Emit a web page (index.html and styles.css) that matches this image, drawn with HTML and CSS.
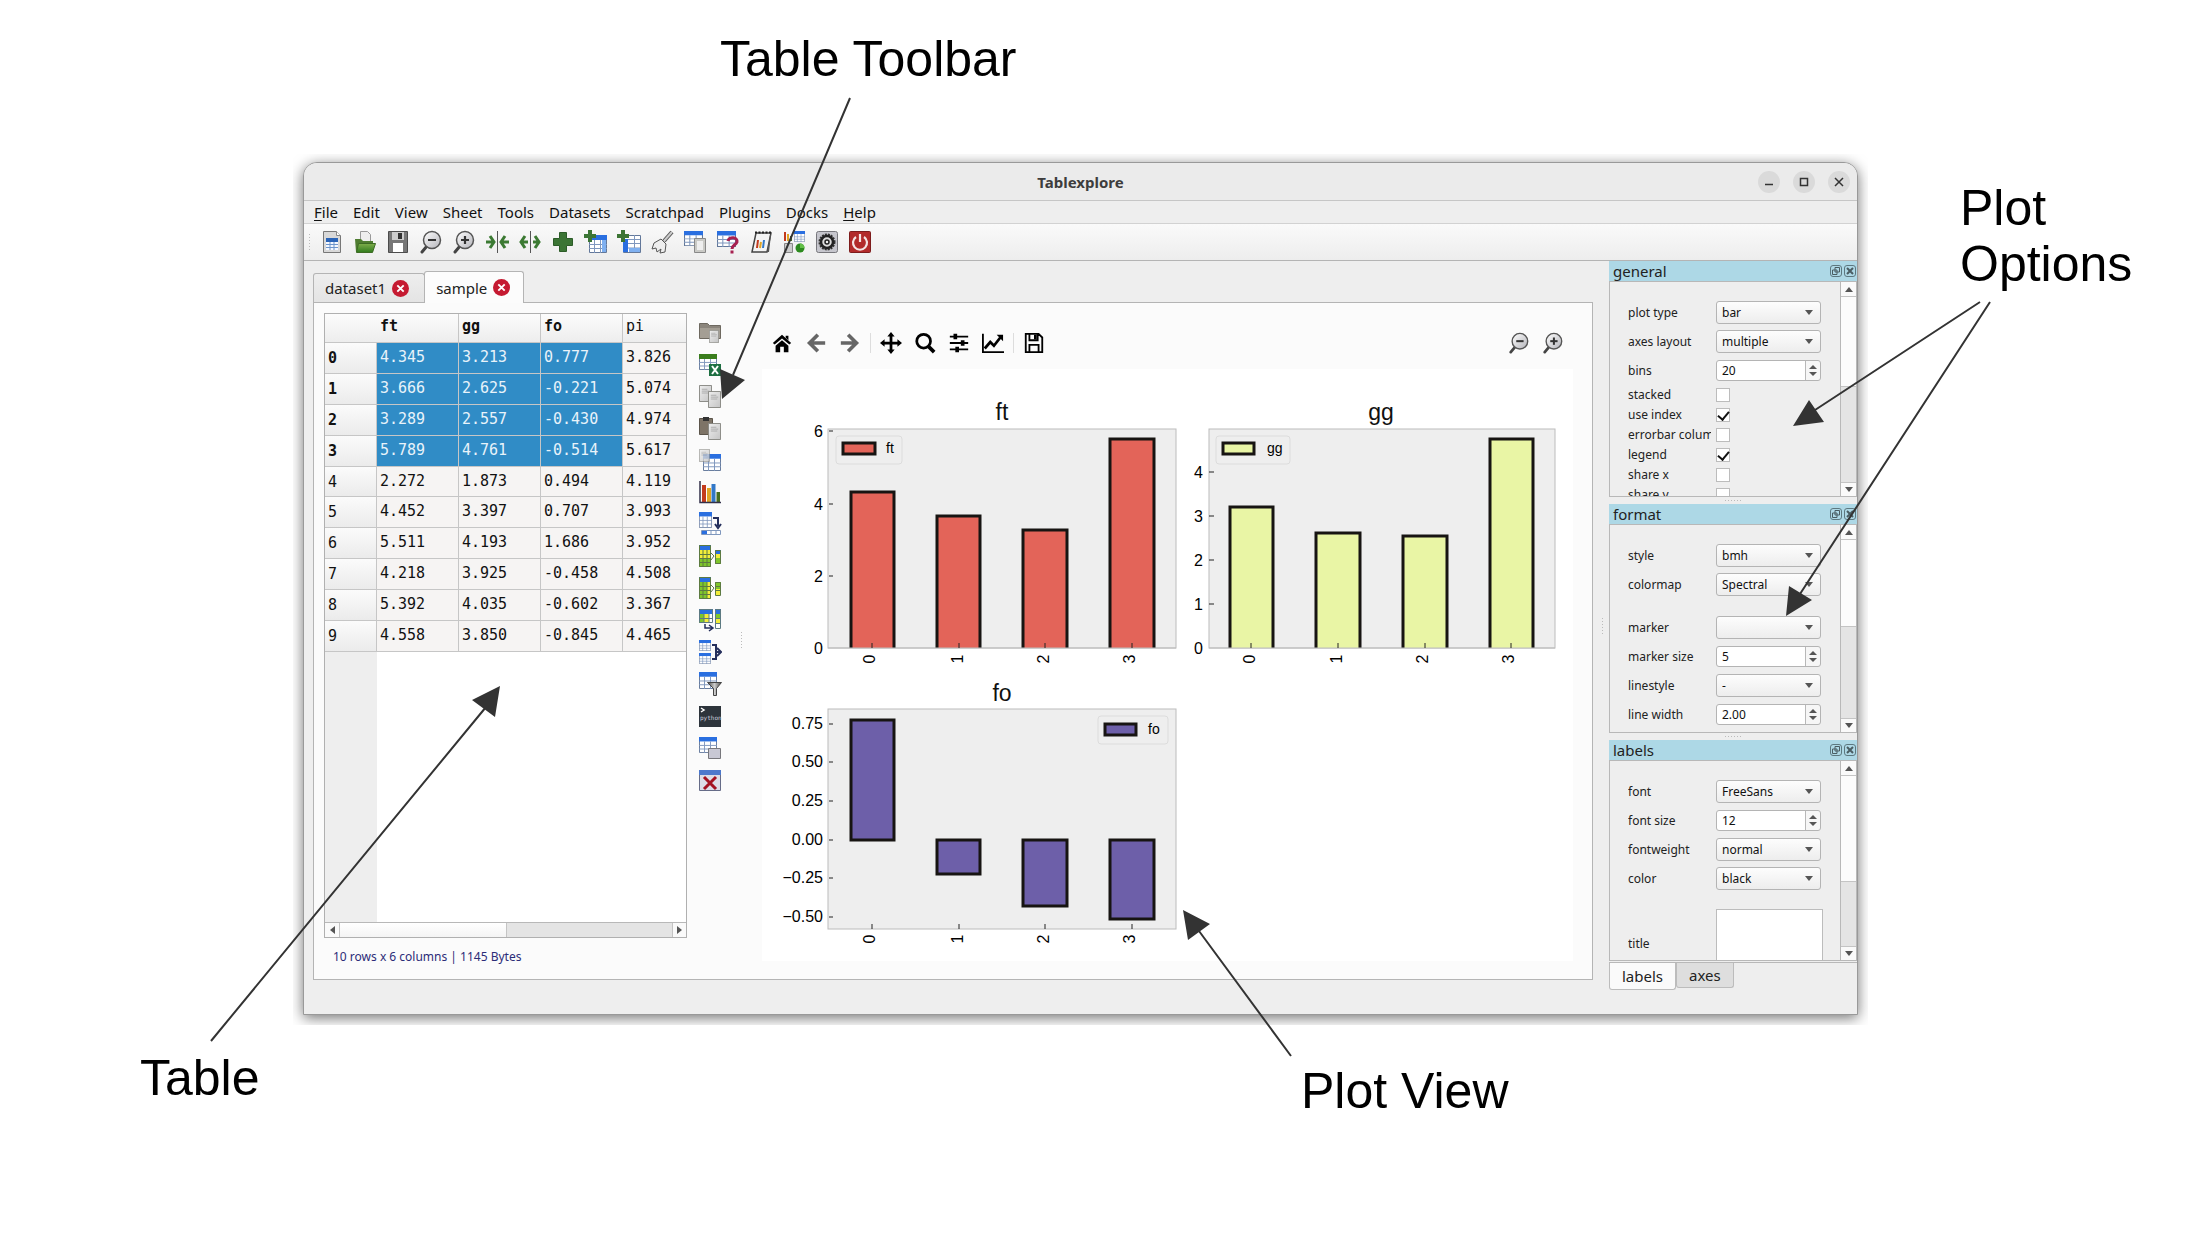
FILE: index.html
```html
<!DOCTYPE html>
<html lang="en">
<head>
<meta charset="utf-8">
<title>Tablexplore overview</title>
<link rel="stylesheet" href="styles.css">
</head>
<body>
<svg class="defs" aria-hidden="true">
  <defs>
    <linearGradient id="lens" x1="0" y1="0" x2="1" y2="1"><stop offset="0" stop-color="#fff"/><stop offset="1" stop-color="#b4b4ba"/></linearGradient>
    <linearGradient id="paper" x1="0" y1="0" x2="1" y2="1"><stop offset="0" stop-color="#eee"/><stop offset="1" stop-color="#c4c4c4"/></linearGradient>
    <linearGradient id="funnel"><stop offset="0" stop-color="#444"/><stop offset=".5" stop-color="#ccc"/><stop offset="1" stop-color="#444"/></linearGradient>
    <linearGradient id="leaf" x1="0" y1="0" x2="0" y2="1"><stop offset="0" stop-color="#7fae4c"/><stop offset="1" stop-color="#2f7a1c"/></linearGradient>
    <symbol id="grid" viewBox="0 0 18 18" preserveAspectRatio="none"><path fill="#fff" stroke="#63789a" d="M.5.5h17v17H.5z"/><path fill="#2a6fe0" d="M0 0h18v5H0z"/><path stroke="#7f97bd" fill="none" d="M0 9.500h18M0 13.500h18M5.500 5v13M11.500 5v13"/></symbol>
    <symbol id="page" viewBox="0 0 14 18" preserveAspectRatio="none"><path fill="url(#paper)" stroke="#85857f" d="M.5.5h13v17H.5z"/><path stroke="#aaa" d="M3 4.500h6M3 6.500h8M3 8.500h7"/></symbol>
    <symbol id="zoom-out" viewBox="0 0 24 24"><path stroke="#444" stroke-width="3" stroke-linecap="round" d="M8 16l-5 6"/><circle cx="13" cy="10" r="8.500" fill="url(#lens)" stroke="#555" stroke-width="1.500"/><path stroke="#333" stroke-width="2.200" d="M9 10h8"/></symbol>
    <symbol id="zoom-in" viewBox="0 0 24 24"><use href="#zoom-out"/><path stroke="#333" stroke-width="2.200" d="M13 6v8"/></symbol>
    <symbol id="bars" viewBox="0 0 24 24"><path fill="#c33b1e" d="M4 5h4v17H4z"/><path fill="#e0a526" d="M9 8h4v14H9z"/><path fill="#3378c7" d="M13.500 4h4v18h-4z"/><path fill="#476d20" d="M18.500 12h3.500v10h-3.500z"/><path fill="none" stroke="#33304a" stroke-width="1.500" d="M2 1v21.500h21"/></symbol>
    <symbol id="dock-float" viewBox="0 0 12 12"><rect x=".5" y=".5" width="11" height="11" rx="2.500" fill="none" stroke="#5d7880"/><path fill="none" stroke="#4a5d63" d="M5 2.500h4.500V7H5zM2.500 5H7v4.500H2.500z"/></symbol>
    <symbol id="dock-close" viewBox="0 0 12 12"><rect x=".5" y=".5" width="11" height="11" rx="2.500" fill="none" stroke="#5d7880"/><path stroke="#4a5d63" stroke-width="2" d="M3 3l6 6M9 3L3 9"/></symbol>
    <symbol id="tab-close" viewBox="0 0 16 16"><circle cx="8" cy="8" r="8" fill="#c51a31"/><path stroke="#fff" stroke-width="1.800" d="M5 5l6 6M11 5l-6 6"/></symbol>
  </defs>
</svg>

<main class="figure">
  <div class="shade">
  <section class="window">
    <header class="titlebar">
      <h1>Tablexplore</h1>
      <div class="winbtns">
        <button aria-label="Minimize"><svg viewBox="0 0 22 22"><path d="M7 13.500h8"/></svg></button>
        <button aria-label="Maximize"><svg viewBox="0 0 22 22"><path d="M7.500 7.500h7v7h-7z"/></svg></button>
        <button aria-label="Close"><svg viewBox="0 0 22 22"><path d="M7 7l8 8M15 7l-8 8"/></svg></button>
      </div>
    </header>
    <nav class="menubar">
      <button><u>F</u>ile</button><button>Edit</button><button>View</button><button>Sheet</button><button>Tools</button><button>Datasets</button><button>Scratchpad</button><button>Plugins</button><button>Docks</button><button><u>H</u>elp</button>
    </nav>
    <div class="toolbar">
      <span class="grip"></span>
      <button aria-label="New"><svg viewBox="0 0 24 24"><path fill="#d8d8d8" stroke="#777" d="M3.500 1.500h13l4 4v17h-17z"/><path fill="#fff" stroke="#888" d="M16.500 1.500v4h4"/><path fill="#f4f8ff" d="M6 8h12v12H6z"/><path fill="#2a64b8" d="M6 8h12v4H6z"/><path stroke="#6d95cc" fill="none" d="M6 14.500h12M6 17.500h12M10 12v8M14 12v8"/></svg></button>
      <button aria-label="Open"><svg viewBox="0 0 24 24"><path fill="#eee" stroke="#999" d="M7.500 1.500h7l3 3v8h-10z"/><path fill="#4f7d31" d="M2 9h6l2 2h10v11H3z"/><path fill="url(#leaf)" stroke="#3d6b24" d="M5.500 13.500h17l-3 9h-16z"/></svg></button>
      <button aria-label="Save"><svg viewBox="0 0 24 24"><path fill="#777" stroke="#4c4c4c" d="M2.500 1.500h19v21h-19z"/><path fill="#ccc" d="M6 2h12v8H6z"/><path fill="#333" d="M12 3h4v6h-4z"/><path fill="#fff" d="M7 13h10v9H7z"/></svg></button>
      <button aria-label="Zoom out"><svg><use href="#zoom-out"/></svg></button>
      <button aria-label="Zoom in"><svg><use href="#zoom-in"/></svg></button>
      <button aria-label="Narrow columns"><svg viewBox="0 0 24 24"><path stroke="#555" d="M12.500 1v22"/><path fill="none" stroke="#3c7a33" stroke-width="3" d="M5 6l4 6-4 6M20 6l-4 6 4 6M1 12h7M24 12h-7"/></svg></button>
      <button aria-label="Widen columns"><svg viewBox="0 0 24 24"><path stroke="#555" d="M12.500 1v22"/><path fill="none" stroke="#3c7a33" stroke-width="3" d="M7 6l-4 6 4 6M17 6l4 6-4 6M4 12h6M20 12h-5"/></svg></button>
      <button aria-label="Add"><svg viewBox="0 0 24 24"><path fill="#3c7535" stroke="#2c5c28" d="M8.500 2.500h7v6h6v7h-6v6h-7v-6h-6v-7h6z"/></svg></button>
      <button aria-label="Add column"><svg viewBox="0 0 24 24"><use href="#grid" x="5" y="5" width="18" height="18"/><path fill="#7fb0f0" d="M18 10h4v12h-4z"/><path stroke="#3c7535" stroke-width="4" d="M6 0v12M0 6h12"/></svg></button>
      <button aria-label="Add row"><svg viewBox="0 0 24 24"><path fill="#fff" stroke="#63789a" d="M6.500 5.500h17v17h-17z"/><path stroke="#7f97bd" fill="none" d="M6 9.500h17M6 13.500h17M6 18h17M17.500 5v17"/><path fill="#2a6fe0" d="M6 9h5v13H6z"/><path fill="#7fb0f0" d="M12 18h11v4H12z"/><path stroke="#3c7535" stroke-width="4" d="M6 0v12M0 6h12"/></svg></button>
      <button aria-label="Clear"><svg viewBox="0 0 24 24"><path stroke="#555" stroke-width="4" d="M22 2l-8 9"/><path stroke="#ccc" stroke-width="2" d="M22 2l-8 9"/><path fill="#eee" stroke="#555" d="M11 9l5 5-1 8-5 1 1-4-4 3-1-4-4 1 2-6z"/></svg></button>
      <button aria-label="Copy table"><svg viewBox="0 0 24 24"><use href="#grid" x="1" y="1" width="19" height="15"/><path fill="#c9c9c5" stroke="#888" d="M11.500 8.500h11v14h-11z"/><path fill="#eee" d="M14 11h6v9h-6z"/></svg></button>
      <button aria-label="Table info"><svg viewBox="0 0 24 24"><use href="#grid" x="1" y="1" width="19" height="16"/><path fill="none" stroke="#a62050" stroke-width="3" d="M12 11c1-5 10-4 9 1-1 3-5 3-5 7M16 20.500v3"/></svg></button>
      <button aria-label="Scratchpad"><svg viewBox="0 0 24 24"><path fill="#f4f4f4" stroke="#444" stroke-width="1.500" d="M7 3h15l-4 19H3z"/><path stroke="#222" stroke-width="2" stroke-dasharray="2 1.500" d="M6 2.500h16"/><path fill="#555" d="M19 17l2-12 1 0-2 17h-2z"/><path stroke="#c33b1e" stroke-width="2" d="M8 18l1-8"/><path stroke="#e0a526" stroke-width="2" d="M11 18l1-6"/><path stroke="#3378c7" stroke-width="2" d="M14 18l1-8"/></svg></button>
      <button aria-label="Plot gallery"><svg viewBox="0 0 24 24"><path fill="#c33b1e" d="M2 2h2v9H2z"/><path fill="#e0a526" d="M5 4h2v7H5z"/><path fill="#476d20" d="M8 6h2v5H8z"/><use href="#grid" x="12" y="1" width="11" height="11"/><path fill="#ccc" stroke="#888" d="M2.500 13.500h8v9h-8z"/><circle cx="18" cy="18" r="4.500" fill="#2c8a1e"/><path fill="#63c048" d="M18 18v-4.500a4.500 4.500 0 0 1 4.500 4.500z"/></svg></button>
      <button aria-label="Preferences"><svg viewBox="0 0 24 24"><rect x="1.500" y="1.500" width="21" height="21" rx="2" fill="#c6c6cd" stroke="#77777c"/><circle cx="12" cy="12" r="7.500" fill="none" stroke="#333" stroke-width="2" stroke-dasharray="2 1"/><circle cx="12" cy="12" r="6" fill="#ddd" stroke="#222" stroke-width="2.500"/><circle cx="12" cy="12" r="2" fill="#eee" stroke="#222" stroke-width="1.500"/></svg></button>
      <button aria-label="Quit"><svg viewBox="0 0 24 24"><rect x="1.500" y="1.500" width="21" height="21" rx="1" fill="#b22a2a" stroke="#7d1c1c"/><path fill="none" stroke="#f4e4e4" stroke-width="2.200" d="M8 7a7 7 0 1 0 8 0M12 4v8"/></svg></button>
    </div>

    <div class="body">
      <div class="work">
        <div class="tabs">
          <button class="tab">dataset1 <svg><use href="#tab-close"/></svg></button>
          <button class="tab on">sample <svg><use href="#tab-close"/></svg></button>
        </div>
        <div class="pane">
          <div class="left">
            <div class="sheet">
              <table>
                <thead><tr><th></th><th>ft</th><th>gg</th><th>fo</th><th class="plain">pi</th></tr></thead>
                <tbody>
                  <tr class="sel"><th>0</th><td>4.345</td><td>3.213</td><td>0.777</td><td>3.826</td></tr>
                  <tr class="sel"><th>1</th><td>3.666</td><td>2.625</td><td>-0.221</td><td>5.074</td></tr>
                  <tr class="sel"><th>2</th><td>3.289</td><td>2.557</td><td>-0.430</td><td>4.974</td></tr>
                  <tr class="sel"><th>3</th><td>5.789</td><td>4.761</td><td>-0.514</td><td>5.617</td></tr>
                  <tr><th>4</th><td>2.272</td><td>1.873</td><td>0.494</td><td>4.119</td></tr>
                  <tr><th>5</th><td>4.452</td><td>3.397</td><td>0.707</td><td>3.993</td></tr>
                  <tr><th>6</th><td>5.511</td><td>4.193</td><td>1.686</td><td>3.952</td></tr>
                  <tr><th>7</th><td>4.218</td><td>3.925</td><td>-0.458</td><td>4.508</td></tr>
                  <tr><th>8</th><td>5.392</td><td>4.035</td><td>-0.602</td><td>3.367</td></tr>
                  <tr><th>9</th><td>4.558</td><td>3.850</td><td>-0.845</td><td>4.465</td></tr>
                </tbody>
              </table>
              <div class="blank"></div>
              <div class="hscroll"><i class="arrow west"></i><span class="thumb"></span><span class="track"></span><i class="arrow east"></i></div>
            </div>
            <p class="status">10 rows x 6 columns | 1145 Bytes</p>
          </div>
          <div class="sidebar">
            <button aria-label="Load"><svg viewBox="0 0 24 24"><path fill="#8b857c" stroke="#6e6960" d="M1.500 3.500h8l2 2h11v13h-21z"/><path fill="#a49e94" d="M2 8h20v10H2z"/><use href="#page" x="11" y="10" width="10" height="13"/></svg></button>
            <button aria-label="Export to Excel"><svg viewBox="0 0 24 24"><use href="#grid" x="1" y="2" width="18" height="16"/><path fill="#3a7d1d" d="M1 2h18v5H1z"/><path fill="#1d6f42" d="M11 12h12v12H11z"/><path stroke="#fff" stroke-width="2" d="M14 14l6 8M20 14l-6 8"/></svg></button>
            <button aria-label="Copy"><svg viewBox="0 0 24 24"><use href="#page" x="1" y="1" width="13" height="17"/><use href="#page" x="10" y="7" width="13" height="17"/></svg></button>
            <button aria-label="Paste"><svg viewBox="0 0 24 24"><path fill="#7e7467" stroke="#5c554b" d="M1.500 2.500h13v16h-13z"/><path fill="#333" d="M5 1h6v4H5z"/><use href="#page" x="10" y="7" width="13" height="17"/></svg></button>
            <button aria-label="Insert table"><svg viewBox="0 0 24 24"><use href="#grid" x="5" y="6" width="18" height="17"/><use href="#page" x="1" y="1" width="11" height="13" opacity=".8"/></svg></button>
            <button aria-label="Plot"><svg><use href="#bars"/></svg></button>
            <button aria-label="Transpose"><svg viewBox="0 0 24 24"><use href="#grid" x="1" y="0" width="13" height="16"/><path fill="none" stroke="#252f5c" stroke-width="2" d="M15 6h5v8M17 12l3 4 3-4"/><path fill="#fff" stroke="#7f97bd" d="M3.500 18.500h19v4h-19zM13 18v5M18 18v5"/><path fill="#2a6fe0" d="M4 19h5v3H4z"/></svg></button>
            <button aria-label="Aggregate"><svg viewBox="0 0 24 24"><path fill="#f3ee3a" d="M1 5h12v9H1z"/><path fill="#7fc62b" d="M1 14h12v9H1zM17 14h6v6h-6z"/><path fill="#2a6fe0" d="M1 1h12v5H1zM17 6h6v4h-6z"/><path fill="#f3ee3a" d="M17 10h6v4h-6z"/><path fill="none" stroke="#5d7a42" d="M1.500 1.500h11v21h-11zM1 10.500h12M1 14.500h12M1 18.500h12M5 6v17M9 6v17M17.500 6.500h5v13h-5zM13 9l3 3-3 4"/></svg></button>
            <button aria-label="Pivot"><svg viewBox="0 0 24 24"><path fill="#7fc62b" d="M1 5h8v18H1zM17 6h6v7h-6z"/><path fill="#f3ee3a" d="M9 5h4v18H9zM17 13h6v6h-6z"/><path fill="#2a6fe0" d="M1 1h12v5H1z"/><path fill="none" stroke="#5d7a42" d="M1.500 1.500h11v21h-11zM1 10.500h12M1 14.500h12M1 18.500h12M5 6v17M9 6v17M17.500 6.500h5v13h-5zM17 10.500h6M17 14.500h6M13 9l3 3-3 4"/></svg></button>
            <button aria-label="Melt"><svg viewBox="0 0 24 24"><path fill="#7fc62b" d="M1 5h8v10H1zM17 5h6v5h-6z"/><path fill="#f3ee3a" d="M6 5h5v10H6zM17 10h6v5h-6z"/><path fill="#fff" d="M11 5h4v10h-4zM17 15h6v6h-6z"/><path fill="#2a6fe0" d="M1 1h14v5H1zM17 1h6v5h-6z"/><path fill="none" stroke="#5d7a82" d="M1.500 1.500h13v13h-13zM1 10.500h14M6 6v9M11 6v9M17.500 1.500h5v19h-5zM17 10.500h6M17 15.500h6"/><path fill="none" stroke="#252f5c" stroke-width="1.500" d="M7 16v4h7M11 17l4 3-4 3"/></svg></button>
            <button aria-label="Merge"><svg viewBox="0 0 24 24"><use href="#grid" x="1" y="0" width="12" height="11"/><use href="#grid" x="1" y="13" width="12" height="11"/><path fill="none" stroke="#252f5c" stroke-width="2" d="M14 5h4v14h-4M18 12h5M19 8l4 4-4 4"/></svg></button>
            <button aria-label="Filter"><svg viewBox="0 0 24 24"><use href="#grid" x="1" y="0" width="18" height="17"/><path fill="url(#funnel)" stroke="#444" d="M9.500 10.500h14l-5 6v7h-3v-7z"/></svg></button>
            <button aria-label="Python console"><svg viewBox="0 0 24 24"><path fill="#2d343b" d="M1 2h22v21H1z"/><path fill="none" stroke="#fff" stroke-width="1.500" d="M3 4l3 2-3 2"/><text x="2" y="16" class="py">python</text></svg></button>
            <button aria-label="Sub table"><svg viewBox="0 0 24 24"><use href="#grid" x="1" y="1" width="18" height="16"/><path fill="#c8c8d4" stroke="#77777c" d="M10.500 12.500h12v10h-12z"/></svg></button>
            <button aria-label="Delete"><svg viewBox="0 0 24 24"><path fill="#dcdce6" stroke="#666c88" d="M1.500 2.500h21v20h-21z"/><path fill="#4c78cc" d="M1 2h22v5H1z"/><path stroke="#a31220" stroke-width="3" d="M6 9l12 12M18 9L6 21"/></svg></button>
          </div>
          <span class="vgrip"></span>
          <div class="plot">
            <div class="plotbar">
              <button aria-label="Home"><svg viewBox="0 0 24 24"><path d="M12 3l10 9-2 1.500L12 7l-8 6.500L2 12l6-5.500zM16 4h3v5l-3-3zM12 9l7 6v7h-5v-6h-4v6H5v-7z"/></svg></button>
              <button aria-label="Back" class="dim"><svg viewBox="0 0 24 24"><path fill="none" stroke-width="4" d="M14 3l-9 9 9 9M5 12h17"/></svg></button>
              <button aria-label="Forward" class="dim"><svg viewBox="0 0 24 24"><path fill="none" stroke-width="4" d="M10 3l9 9-9 9M19 12H2"/></svg></button>
              <span class="sep"></span>
              <button aria-label="Pan"><svg viewBox="0 0 24 24"><path d="M12 0l4 5h-2.500v5.500H19V8l5 4-5 4v-2.500h-5.500V19H16l-4 5-4-5h2.500v-5.500H5V16l-5-4 5-4v2.500h5.500V5H8z"/></svg></button>
              <button aria-label="Zoom"><svg viewBox="0 0 24 24"><circle cx="10.500" cy="10" r="7.500" fill="none" stroke="#000" stroke-width="3"/><path stroke="#000" stroke-width="4" d="M16 16l6 6"/></svg></button>
              <button aria-label="Subplots"><svg viewBox="0 0 24 24"><path stroke="#000" stroke-width="2" d="M2 5h20M2 12h20M2 19h20"/><path d="M6 2h4v6H6zM14 9h4v6h-4zM8 16h4v6H8z"/></svg></button>
              <button aria-label="Customize"><svg viewBox="0 0 24 24"><path fill="none" stroke="#000" stroke-width="2" d="M1 2v20h23"/><path fill="none" stroke="#000" stroke-width="3" d="M3 18l6-7 4 4 7-9"/><path d="M16 3h7v7z"/></svg></button>
              <span class="sep"></span>
              <button aria-label="Save figure"><svg viewBox="0 0 24 24"><path fill="none" stroke="#000" stroke-width="2" d="M3 2h14l4 4v16H3zM7 22v-8h10v8M7 2v7h9V2"/><path d="M12 3h3v5h-3z"/></svg></button>
              <span class="push"></span>
              <button aria-label="Shrink plot"><svg><use href="#zoom-out"/></svg></button>
              <button aria-label="Enlarge plot"><svg><use href="#zoom-in"/></svg></button>
            </div>
            <svg class="canvas" viewBox="762 369 811 592" role="img" aria-label="Bar charts of ft, gg and fo">
              <g class="axes"><rect x="828" y="429" width="348" height="219"/><rect x="1209" y="429" width="346" height="219"/><rect x="828" y="709" width="348" height="220"/></g>
              <g class="red bar"><path d="M851 648V492h43v156M937 648V516h43v132M1023 648V530h44v118M1110 648V439h44v209"/></g>
              <g class="lime bar"><path d="M1230 648V507h43v141M1316 648V533h44v115M1403 648V536h44v112M1490 648V439h43v209"/></g>
              <g class="violet bar"><path d="M851 720h43v120h-43zM937 840h43v34h-43zM1023 840h44v66h-44zM1110 840h44v79h-44z"/></g>
              <path class="base" d="M828 648h348M1209 648h346"/>
              <path class="ticks" d="M829 431h4M829 504h4M829 576h4M1209 472h5M1209 516h5M1209 560h5M1209 604h5M829 724h4M829 762h4M829 801h4M829 840h4M829 878h4M829 917h4M872 648v-5M959 648v-5M1045 648v-5M1132 648v-5M1251 648v-5M1338 648v-5M1425 648v-5M1511 648v-5M872 929v-5M959 929v-5M1045 929v-5M1132 929v-5"/>
              <g class="legend"><rect x="836" y="436" width="66" height="28" rx="3"/><rect x="1216" y="436" width="74" height="28" rx="3"/><rect x="1098" y="716" width="70" height="28" rx="3"/></g>
              <g class="bar"><path class="red" d="M843 443h32v11h-32z"/><path class="lime" d="M1223 443h31v11h-31z"/><path class="violet" d="M1105 724h31v11h-31z"/></g>
              <g class="title"><text x="1002" y="420">ft</text><text x="1381" y="420">gg</text><text x="1002" y="701">fo</text></g>
              <g class="small"><text x="886" y="453">ft</text><text x="1267" y="453">gg</text><text x="1148" y="734">fo</text></g>
              <g class="ylab"><text x="823" y="437">6</text><text x="823" y="510">4</text><text x="823" y="582">2</text><text x="823" y="654">0</text><text x="1203" y="478">4</text><text x="1203" y="522">3</text><text x="1203" y="566">2</text><text x="1203" y="610">1</text><text x="1203" y="654">0</text><text x="823" y="729">0.75</text><text x="823" y="767">0.50</text><text x="823" y="806">0.25</text><text x="823" y="845">0.00</text><text x="823" y="883">−0.25</text><text x="823" y="922">−0.50</text></g>
              <g class="xlab"><text transform="translate(875 659) rotate(-90)">0</text><text transform="translate(963 659) rotate(-90)">1</text><text transform="translate(1049 659) rotate(-90)">2</text><text transform="translate(1135 659) rotate(-90)">3</text><text transform="translate(1255 659) rotate(-90)">0</text><text transform="translate(1342 659) rotate(-90)">1</text><text transform="translate(1428 659) rotate(-90)">2</text><text transform="translate(1514 659) rotate(-90)">3</text><text transform="translate(875 939) rotate(-90)">0</text><text transform="translate(963 939) rotate(-90)">1</text><text transform="translate(1049 939) rotate(-90)">2</text><text transform="translate(1135 939) rotate(-90)">3</text></g>
            </svg>
          </div>
        </div>
      </div>

      <span class="vgrip mid"></span>
      <aside class="docks">
        <section class="dock general">
          <header><h2>general</h2><button aria-label="Float"><svg><use href="#dock-float"/></svg></button><button aria-label="Close"><svg><use href="#dock-close"/></svg></button></header>
          <div class="dockbody">
            <form>
              <div class="row"><label for="ptype">plot type</label><span class="combo"><select id="ptype"><option>bar</option></select></span></div>
              <div class="row"><label for="layout">axes layout</label><span class="combo"><select id="layout"><option>multiple</option></select></span></div>
              <div class="row"><label for="bins">bins</label><span class="spin"><input id="bins" type="number" value="20"></span></div>
              <div class="row tick"><label for="stacked">stacked</label><input id="stacked" type="checkbox"></div>
              <div class="row tick"><label for="useidx">use index</label><input id="useidx" type="checkbox" checked></div>
              <div class="row tick"><label for="err">errorbar colum</label><input id="err" type="checkbox"></div>
              <div class="row tick"><label for="leg">legend</label><input id="leg" type="checkbox" checked></div>
              <div class="row tick"><label for="sx">share x</label><input id="sx" type="checkbox"></div>
              <div class="row tick"><label for="sy">share y</label><input id="sy" type="checkbox"></div>
            </form>
            <div class="vscroll"><i class="arrow north"></i><span class="thumb"></span><span class="track"></span><i class="arrow south"></i></div>
          </div>
        </section>
        <span class="hgrip"></span>
        <section class="dock format">
          <header><h2>format</h2><button aria-label="Float"><svg><use href="#dock-float"/></svg></button><button aria-label="Close"><svg><use href="#dock-close"/></svg></button></header>
          <div class="dockbody">
            <form>
              <div class="row"><label for="style">style</label><span class="combo"><select id="style"><option>bmh</option></select></span></div>
              <div class="row"><label for="cmap">colormap</label><span class="combo"><select id="cmap"><option>Spectral</option></select></span></div>
              <div class="row apart"><label for="marker">marker</label><span class="combo"><select id="marker"><option></option></select></span></div>
              <div class="row"><label for="msize">marker size</label><span class="spin"><input id="msize" type="number" value="5"></span></div>
              <div class="row"><label for="lstyle">linestyle</label><span class="combo"><select id="lstyle"><option>-</option></select></span></div>
              <div class="row"><label for="lwidth">line width</label><span class="spin"><input id="lwidth" type="number" step="0.01" value="2.00"></span></div>
              <div class="row"><span></span><span class="spin"><input type="number" aria-label="alpha"></span></div>
            </form>
            <div class="vscroll"><i class="arrow north"></i><span class="thumb"></span><span class="track"></span><i class="arrow south"></i></div>
          </div>
        </section>
        <span class="hgrip"></span>
        <section class="dock labels">
          <header><h2>labels</h2><button aria-label="Float"><svg><use href="#dock-float"/></svg></button><button aria-label="Close"><svg><use href="#dock-close"/></svg></button></header>
          <div class="dockbody">
            <form>
              <div class="row"><label for="font">font</label><span class="combo"><select id="font"><option>FreeSans</option></select></span></div>
              <div class="row"><label for="fsize">font size</label><span class="spin"><input id="fsize" type="number" value="12"></span></div>
              <div class="row"><label for="fweight">fontweight</label><span class="combo"><select id="fweight"><option>normal</option></select></span></div>
              <div class="row"><label for="color">color</label><span class="combo"><select id="color"><option>black</option></select></span></div>
              <div class="row apart"><label for="title">title</label><textarea id="title"></textarea></div>
            </form>
            <div class="vscroll"><i class="arrow north"></i><span class="thumb"></span><span class="track"></span><i class="arrow south"></i></div>
          </div>
        </section>
        <div class="docktabs"><button class="on">labels</button><button>axes</button></div>
      </aside>
    </div>
  </section>
  </div>

  <svg class="arrows" viewBox="0 0 2204 1240" aria-hidden="true">
    <path class="shaft" d="M850 98L733 375M211 1041L486 707M1291 1056L1199 931M1980 302L1815 410M1990 302L1800 594"/>
    <path d="M722 399l-2-30 25 11zM500 686l-28 14 23 17zM1183 910l5 30 22-16zM1793 426l16-26 15 22zM1786 616l3-30 23 14z"/>
  </svg>
  <p class="note n-toolbar">Table Toolbar</p>
  <p class="note n-options">Plot<br>Options</p>
  <p class="note n-table">Table</p>
  <p class="note n-plot">Plot View</p>
</main>
</body>
</html>
```
FILE: styles.css
```css
* { box-sizing: border-box; }
body { margin: 0; background: #fff; color: #222; font: 13px/20px "Noto Sans", "Open Sans", sans-serif; }
h1, h2, p { margin: 0; }
button { font: inherit; color: inherit; background: none; border: 0; padding: 0; }
svg { display: block; }
.defs { position: absolute; width: 0; height: 0; }

.figure { position: relative; min-height: 1240px; padding: 154px 336px 0 293px; }
.shade { padding: 8px 10px 10px; overflow: hidden; }
.window { border: 1px solid #999; border-radius: 14px 14px 0 0; background: #eee; box-shadow: 0 3px 14px rgba(0, 0, 0, .55); overflow: hidden; }

.titlebar { display: grid; grid-template-columns: 1fr auto 1fr; align-items: center; height: 38px; background: #ebebeb; border-bottom: 1px solid #c6c6c6; }
.titlebar h1 { grid-column: 2; font-size: 15px; font-weight: 700; color: #3d3d3d; }
.winbtns { display: flex; justify-content: flex-end; gap: 13px; padding-right: 7px; }
.winbtns button { width: 22px; height: 22px; border-radius: 50%; background: #dadada; }
.winbtns path { fill: none; stroke: #333; stroke-width: 1.500; }

.menubar { display: flex; gap: 15px; height: 23px; padding-left: 10px; align-items: center; border-bottom: 1px solid #d2d2d2; font-size: 15px; color: #111; }
.menubar u { text-underline-offset: 2px; }

.toolbar { display: flex; align-items: center; gap: 9px; height: 37px; padding-left: 4px; background: linear-gradient(#fafafa, #ededed); border-bottom: 1px solid #b4b4b4; }
.toolbar svg { width: 24px; height: 24px; }
.grip { width: 3px; height: 18px; background: radial-gradient(circle, #bbb 1px, transparent 1px) 0 0 / 3px 3px; }

.body { display: flex; padding: 0 0 24px 9px; }
.work { flex: 1; min-width: 0; padding: 10px 0; display: flex; flex-direction: column; }
.tabs { display: flex; align-items: flex-end; height: 31px; font-size: 15px; }
.tab { display: flex; align-items: center; gap: 6px; height: 29px; padding: 0 15px 0 11px; border: 1px solid #b4b4b4; border-bottom: 0; border-radius: 3px 3px 0 0; background: linear-gradient(#eee, #e4e4e4); }
.tab svg { width: 17px; height: 17px; }
.tab.on { position: relative; height: 32px; margin: 0 0 -1px -1px; padding-right: 13px; background: #fcfcfc; }
.pane { flex: 1; display: flex; border: 1px solid #b4b4b4; background: #fbfbfb; padding: 10px 19px 0 10px; }

.left { width: 363px; }
.sheet { height: 625px; display: flex; flex-direction: column; border: 1px solid #b0b0b0; background: #fff; }
table { width: 361px; height: 338px; border-collapse: separate; border-spacing: 0; table-layout: fixed; font: 15px/18px "DejaVu Sans Mono", monospace; color: #111; }
th, td { padding: 0 0 0 3px; text-align: left; border-right: 1px solid #c6c6c6; border-bottom: 1px solid #c6c6c6; font-weight: 400; }
tr > :last-child { border-right: 0; }
td { background: #f6f4f3; padding-bottom: 2px; }
thead th { height: 29px; background: linear-gradient(#fcfcfc, #ededed); font-weight: 700; padding-bottom: 5px; }
thead th:first-child { width: 52px; border-right: 0; }
thead th:nth-child(n+2) { width: 82px; }
thead th:last-child { width: auto; }
thead th.plain { font-weight: 400; }
tbody th { background: linear-gradient(#fbfbfb, #ebebeb); }
.sel th { font-weight: 700; }
.sel td:not(:last-child) { background: #308cc6; color: #e8f3fa; }
.blank { flex: 1; background: linear-gradient(90deg, #eee 52px, #fff 52px); }

.arrow { flex: none; display: grid; place-items: center; width: 14px; height: 14px; background: #fafafa; }
.arrow::before { content: ""; border: 4px solid transparent; }
.west::before { border-right: 5px solid #555; border-left: 0; }
.east::before { border-left: 5px solid #555; border-right: 0; }
.north::before { border-bottom: 5px solid #555; border-top: 0; }
.south::before { border-top: 5px solid #555; border-bottom: 0; }
.hscroll { display: flex; height: 15px; border-top: 1px solid #b8b8b8; }
.hscroll .thumb, .hscroll .track { flex: 1; }
.track { background: #e4e4e4; }
.thumb { background: linear-gradient(#fff, #f4f4f4); border: 0 solid #c4c4c4; }
.hscroll .thumb { border-width: 0 1px; }
.hscroll .east { border-left: 1px solid #c4c4c4; }
.status { padding: 9px 0 0 9px; font-size: 12px; color: #2c2c78; }

.sidebar { display: flex; flex-direction: column; gap: 8px; padding: 7px 0 0 11px; width: 53px; }
.sidebar button, .sidebar svg { width: 24px; height: 24px; }
.py { font: 6px "DejaVu Sans Mono", monospace; fill: #ccd; }
.vgrip { align-self: center; width: 3px; height: 18px; margin-top: -12px; background: radial-gradient(circle, #bbb 1px, transparent 1px) 0 0 / 3px 3px; }
.plot { flex: 1; min-width: 0; margin: -10px 0 0 19px; }
.plotbar { display: flex; align-items: center; gap: 12px; height: 66px; padding: 14px 9px 0 9px; }
.plotbar button, .plotbar svg { width: 22px; height: 22px; }
.plotbar .dim path { stroke: #666; }
.plotbar .sep { width: 1px; height: 20px; background: #ddd; margin: 0 -3px; }
.push { flex: 1; }
.canvas { width: 100%; background: #fff; font-family: "Liberation Sans", Arial, sans-serif; }
.axes rect { fill: #eee; stroke: #bcbcbc; }
.bar { stroke: #171412; stroke-width: 3; }
.red { fill: #e36459; }
.lime { fill: #e9f5a5; }
.violet { fill: #6d5fa9; }
.base { stroke: #bcbcbc; }
.ticks { stroke: #222; fill: none; }
.legend rect { fill: #eee; stroke: #dcdcdc; }
.title { font-size: 23px; text-anchor: middle; fill: #111; }
.small { font-size: 14px; }
.ylab { font-size: 16px; text-anchor: end; }
.xlab { font-size: 16px; text-anchor: middle; }

.mid { margin: 0 5px 0 8px; }
.docks { width: 248px; display: flex; flex-direction: column; }
.dock header { display: flex; align-items: center; gap: 2px; height: 20px; padding: 0 1px 0 4px; background: #add8e6; }
.dock h2 { flex: 1; font-size: 15px; font-weight: 400; line-height: 20px; }
.dock header svg { width: 12px; height: 12px; }
.dockbody { display: flex; border: 1px solid #b8b8b8; overflow: hidden; }
.general .dockbody { height: 216px; }
.format .dockbody { height: 209px; }
.labels .dockbody { height: 201px; }
.dockbody form { flex: 1; padding: 16px 0 0 18px; }
.row { display: grid; grid-template-columns: 83px 105px; column-gap: 5px; align-items: center; height: 29px; font-size: 12px; }
.row label { overflow: hidden; white-space: nowrap; }
.row.tick { height: 20px; }
.row.apart { margin-top: 14px; }
.labels .row.apart { height: 70px; margin-top: 16px; }
.combo, .spin { position: relative; display: block; }
select, input[type="number"] { width: 100%; margin: 0; padding: 0 0 0 5px; border: 1px solid #b4b4b4; border-radius: 3px; appearance: none; font: inherit; color: #111; outline: 0; }
select { display: block; height: 23px; background: linear-gradient(#fdfdfd, #ededed); }
input[type="number"] { display: block; height: 21px; background: #fff; appearance: textfield; }
input::-webkit-inner-spin-button { display: none; }
.combo::after { content: ""; position: absolute; right: 8px; top: 9px; border: 4px solid transparent; border-top: 5px solid #555; border-bottom: 0; pointer-events: none; }
.spin::before, .spin::after { content: ""; position: absolute; right: 4px; border: 4px solid transparent; }
.spin::before { top: 5px; border-bottom: 4px solid #555; border-top: 0; }
.spin::after { top: 12px; border-top: 4px solid #555; border-bottom: 0; }
.spin input[type="number"] { background: linear-gradient(90deg, #fff 88px, #b8b8b8 88px, #b8b8b8 89px, #f6f6f6 89px); }
input[type="checkbox"] { appearance: none; display: grid; place-items: center; width: 14px; height: 14px; margin: 0; border: 1px solid #bcbcbc; background: #fff; }
input:checked::after { content: ""; width: 5px; height: 9px; margin-top: -2px; border: solid #111; border-width: 0 2px 2px 0; transform: rotate(40deg); }
textarea { display: block; width: 107px; height: 70px; resize: none; border: 1px solid #bcbcbc; background: #fff; }
.vscroll { width: 16px; display: flex; flex-direction: column; border-left: 1px solid #b8b8b8; }
.vscroll .arrow { width: 15px; }
.vscroll .thumb { flex: 90; border-width: 1px 0; background: #fcfcfc; }
.vscroll .track { flex: 96; }
.vscroll .south { border-top: 1px solid #c4c4c4; }
.labels .thumb { flex: 105; }
.labels .track { flex: 64; }
.hgrip { align-self: center; height: 7px; width: 18px; background: radial-gradient(circle, #bbb 1px, transparent 1px) 0 2px / 3px 3px repeat-x; }
.docktabs { display: flex; align-items: flex-start; margin-top: 1px; border-top: 1px solid #b8b8b8; font-size: 15px; }
.docktabs button { height: 25px; padding: 0 12px; border: 1px solid #bcbcbc; border-top: 0; border-radius: 0 0 3px 3px; background: #dedede; }
.docktabs .on { height: 27px; background: #fafafa; }

.arrows { position: absolute; inset: 0; width: 100%; pointer-events: none; fill: #333; }
.shaft { stroke: #333; stroke-width: 2; fill: none; }
.note { position: absolute; font: 50px/56px "Liberation Sans", Arial, sans-serif; color: #000; white-space: nowrap; }
.n-toolbar { left: 720px; top: 31px; }
.n-options { left: 1960px; top: 180px; }
.n-table { left: 140px; top: 1050px; }
.n-plot { left: 1301px; top: 1063px; }
```
